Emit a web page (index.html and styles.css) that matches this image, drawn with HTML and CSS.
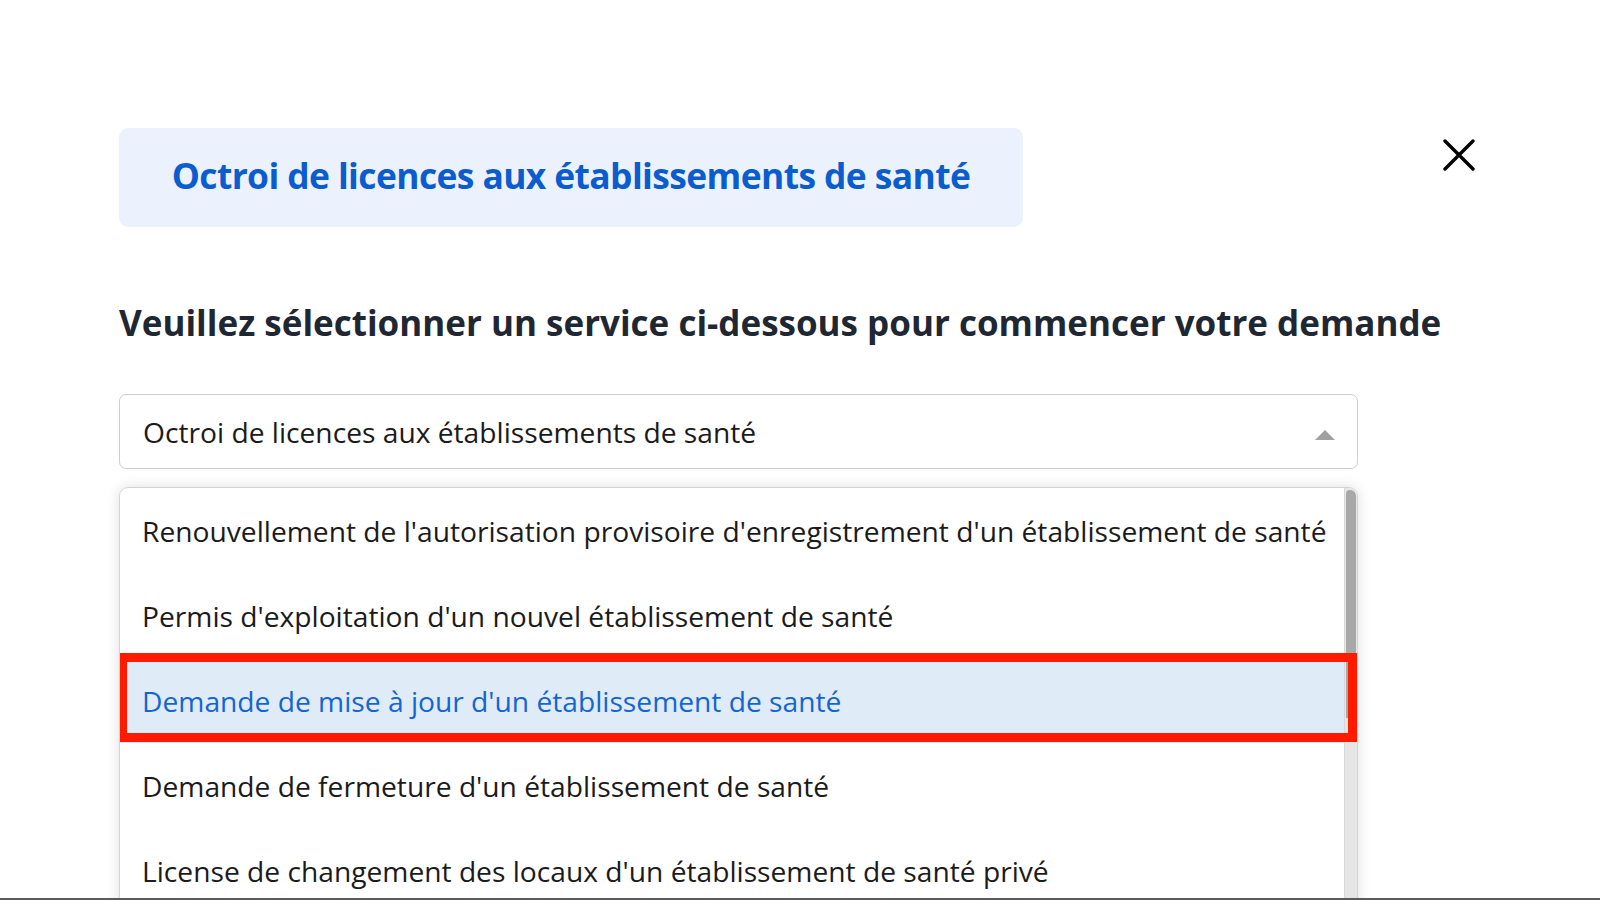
FILE: index.html
```html
<!DOCTYPE html>
<html lang="fr">
<head>
<meta charset="utf-8">
<title>Octroi de licences aux établissements de santé</title>
<link rel="stylesheet" href="styles.css">
</head>
<body>
<div class="page">
  <header class="header">
    <div class="title-box">
      <h1 class="title">Octroi de licences aux établissements de santé</h1>
    </div>
    <button class="close" aria-label="Fermer">
      <svg width="32" height="32" viewBox="0 0 32 32"><path d="M2 2 L30 30 M30 2 L2 30" stroke="#000" stroke-width="3.4" stroke-linecap="round" fill="none"/></svg>
    </button>
  </header>

  <h2 class="heading">Veuillez sélectionner un service ci-dessous pour commencer votre demande</h2>

  <div class="select">
    <span class="select-value">Octroi de licences aux établissements de santé</span>
    <span class="caret"></span>
  </div>

  <div class="menu">
    <ul class="options">
      <li class="option">Renouvellement de l'autorisation provisoire d'enregistrement d'un établissement de santé</li>
      <li class="option">Permis d'exploitation d'un nouvel établissement de santé</li>
      <li class="option option-active">Demande de mise à jour d'un établissement de santé<span class="mark"></span></li>
      <li class="option">Demande de fermeture d'un établissement de santé</li>
      <li class="option">License de changement des locaux d'un établissement de santé privé</li>
    </ul>
    <div class="scrollbar"><div class="thumb"></div></div>
  </div>
</div>
<div class="frame-edge"></div>
</body>
</html>
```

FILE: styles.css
```css
html, body {
  margin: 0;
  padding: 0;
  background: #ffffff;
  height: 900px;
  overflow: hidden;
}

body {
  font-family: "Open Sans", "Noto Sans", sans-serif;
  color: #1b1b1b;
}

.page {
  padding: 128px 0 0 119px;
  width: 1355px;
}

.header {
  display: flex;
  justify-content: space-between;
  align-items: flex-start;
}

.title-box {
  width: 904px;
  height: 99px;
  background: #ebf2fd;
  border-radius: 9px;
  display: flex;
  align-items: center;
  justify-content: center;
}

.title {
  margin: 0 0 5px 0;
  font-size: 35.4px;
  font-weight: 700;
  color: #0b5ccf;
  letter-spacing: -0.6px;
}

.close {
  margin-top: 11px;
  padding: 0;
  border: none;
  background: none;
  width: 32px;
  height: 32px;
  margin-right: -1px;
}

.close svg { display: block; }

.heading {
  margin: 71px 0 0 0;
  font-size: 35px;
  font-weight: 700;
  color: #1f2733;
  line-height: 50px;
}

.select {
  margin-top: 46px;
  width: 1239px;
  height: 75px;
  box-sizing: border-box;
  border: 1.5px solid #cfcfcf;
  border-radius: 7px;
  display: flex;
  align-items: center;
  justify-content: space-between;
  padding: 0 22px 0 23px;
}

.select-value {
  font-size: 28.2px;
}

.caret {
  width: 0;
  height: 0;
  border-left: 10px solid transparent;
  border-right: 10px solid transparent;
  border-bottom: 10px solid #a0a0a0;
  margin-top: 6px;
}

.menu {
  margin-top: 18px;
  width: 1239px;
  height: 450px;
  box-sizing: border-box;
  border: 1.5px solid #d4d4d4;
  border-radius: 9px 9px 0 0;
  box-shadow: 0 0 14px rgba(0, 0, 0, 0.13);
  display: flex;
  overflow: hidden;
}

.options {
  list-style: none;
  margin: 0;
  padding: 0;
  flex: 1;
}

.option {
  height: 85px;
  display: flex;
  align-items: center;
  padding-left: 22px;
  font-size: 28.2px;
  color: #1b1b1b;
  position: relative;
}

.option-active {
  background: #e0ebf8;
  color: #1565d0;
}

.mark {
  position: absolute;
  left: -2px;
  right: -13px;
  top: -5px;
  bottom: 1px;
  border: 9px solid #ff1a00;
  pointer-events: none;
}

.scrollbar {
  width: 12px;
  background: #e6e6e6;
  border-left: 1px solid #d8d8d8;
}

.thumb {
  height: 228px;
  background: #a8a8a8;
  border-radius: 4px 6px 0 0;
  margin: 2px 1px 0 1px;
}

.frame-edge {
  position: fixed;
  left: 0;
  right: 0;
  bottom: 0;
  height: 2px;
  background: #5a5a5a;
}
```
